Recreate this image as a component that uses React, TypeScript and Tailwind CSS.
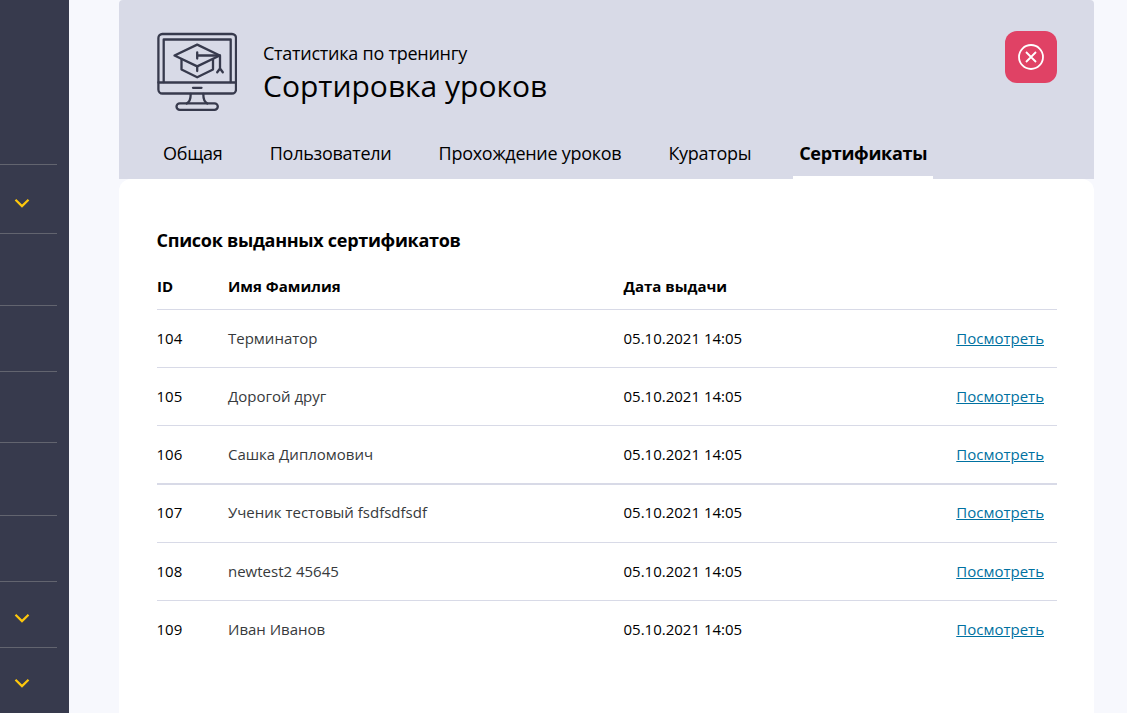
import React from "react";

type SidebarItem = { height: string; open?: string };

const sidebarItems: SidebarItem[] = [
  { height: "h-[165px]" },
  { height: "h-[69px]", open: "pt-[33px]" },
  { height: "h-[72px]" },
  { height: "h-[66px]" },
  { height: "h-[71px]" },
  { height: "h-[73px]" },
  { height: "h-[66px]" },
  { height: "h-[66px]", open: "pt-[31px]" },
  { height: "h-[66px]", open: "pt-[30px]" },
];

const tabs = [
  { label: "Общая", width: "w-[59px]" },
  { label: "Пользователи", width: "w-[121px]" },
  { label: "Прохождение уроков", width: "w-[182px]" },
  { label: "Кураторы", width: "w-[83px]" },
];

const rows = [
  { id: 104, name: "Терминатор", line: "h-[58px] border-b pb-[2px]" },
  { id: 105, name: "Дорогой друг", line: "h-[58px] border-b pb-[2px]" },
  { id: 106, name: "Сашка Дипломович", line: "h-[59px] border-b-2 pb-[2px]" },
  { id: 107, name: "Ученик тестовый fsdfsdfsdf", line: "h-[58px] border-b pb-[3px]" },
  { id: 108, name: "newtest2 45645", line: "h-[58px] border-b pb-[2px]" },
  { id: 109, name: "Иван Иванов", line: "h-[58px] pb-[2px]" },
];

function Chevron() {
  return (
    <svg width="16" height="10" viewBox="0 0 16 10" fill="none" stroke="#fdc70c" strokeWidth="2.2">
      <path d="M1.5 1.8 8 8.1l6.5-6.3" />
    </svg>
  );
}

function TrainingIcon() {
  return (
    <svg
      className="mt-px shrink-0"
      width="80"
      height="80"
      viewBox="0 0 80 80"
      fill="none"
      stroke="#373a4d"
      strokeWidth="2.3"
      strokeLinejoin="round"
      strokeLinecap="round"
    >
      <rect x="1.4" y="2" width="77.6" height="59.5" rx="4" />
      <path d="M1.4 50.5H79" />
      <path d="M6.7 50V7.5h67V50" />
      <path d="M36 55.8h8.5" />
      <path d="M33.7 62c0 5-1 8-4 9.5M46.3 62c0 5 1 8 4 9.5" />
      <rect x="19.5" y="71.3" width="41.3" height="6.6" rx="3.3" />
      <path d="M40.2 12.6 62.8 23.5 40.2 34.4 17.5 23.5Z" />
      <path d="M24.5 27.5v10l15.7 7.8 15.8-7.8v-10" />
      <path d="M40.2 35v4M40.2 20.5v6M40.5 23.5H63v14.2M63 36.5l-2.8 3.8M63 36.5l2.8 3.8" />
    </svg>
  );
}

export default function App() {
  return (
    <div className="flex h-[713px] w-full overflow-hidden bg-[#f7f8fd] font-['Open_Sans','Noto_Sans',sans-serif] text-black">
      <aside className="flex w-[69px] shrink-0 flex-col overflow-hidden bg-[#373a4d]">
        {sidebarItems.map((item, i) => (
          <div
            key={i}
            className={`mr-3 shrink-0 border-b border-[#62646f] pl-[14px] ${item.height} ${item.open ?? ""}`}
          >
            {item.open && <Chevron />}
          </div>
        ))}
      </aside>

      <main className="ml-[50px] flex w-[975px] shrink-0 flex-col">
        <header className="flex h-[179px] shrink-0 flex-col rounded-t-[4px] bg-[#d8dae7]">
          <div className="flex h-[128px] pt-[31px] pr-[37px] pl-[38px]">
            <TrainingIcon />
            <div className="ml-[26px] flex-1 pt-[9px]">
              <p className="text-[18px] leading-[27px] tracking-[-0.25px]">Статистика по тренингу</p>
              <h1 className="-mt-px text-[30px] leading-[40px]">Сортировка уроков</h1>
            </div>
            <button className="flex size-[52px] items-center justify-center rounded-[12px] bg-[#e04265]">
              <svg width="26" height="26" viewBox="0 0 26 26" fill="none" stroke="#fff" strokeWidth="1.8">
                <circle cx="13" cy="13" r="12" />
                <path d="m8 8 10 10M18 8 8 18" />
              </svg>
            </button>
          </div>
          <nav className="flex h-[51px] gap-[47.8px] pl-[44px] text-[18px] leading-[27px] whitespace-nowrap">
            {tabs.map((tab) => (
              <a key={tab.label} className={`pt-[12px] tracking-[-0.28px] ${tab.width}`}>
                {tab.label}
              </a>
            ))}
            <a className="-ml-[6px] w-[140px] border-b-[3px] border-white px-[6px] pt-[12px] font-bold tracking-[-0.3px]">
              Сертификаты
            </a>
          </nav>
        </header>

        <section className="flex-1 rounded-t-[12px] bg-white pr-[37px] pl-[37.6px]">
          <h2 className="pt-[49px] text-[18px] leading-[25px] font-bold tracking-[-0.3px]">Список выданных сертификатов</h2>
          <div className="ml-[0.4px] flex h-[57px] items-center border-b border-[#d8dae7] pt-[9px] text-[15px] leading-[22px] font-bold">
            <span className="w-[71px]">ID</span>
            <span className="w-[395.5px]">Имя Фамилия</span>
            <span>Дата выдачи</span>
          </div>
          {rows.map((row) => (
            <div
              key={row.id}
              className={`ml-[0.4px] flex items-center border-[#d8dae7] text-[15px] leading-[20px] ${row.line}`}
            >
              <span className="-ml-[0.5px] w-[71.5px]">{row.id}</span>
              <span className="w-[395.5px] text-[#373a3c]">{row.name}</span>
              <span className="flex-1">05.10.2021 14:05</span>
              <a className="mr-[13px] text-[#0071a1] underline">Посмотреть</a>
            </div>
          ))}
        </section>
      </main>
    </div>
  );
}
